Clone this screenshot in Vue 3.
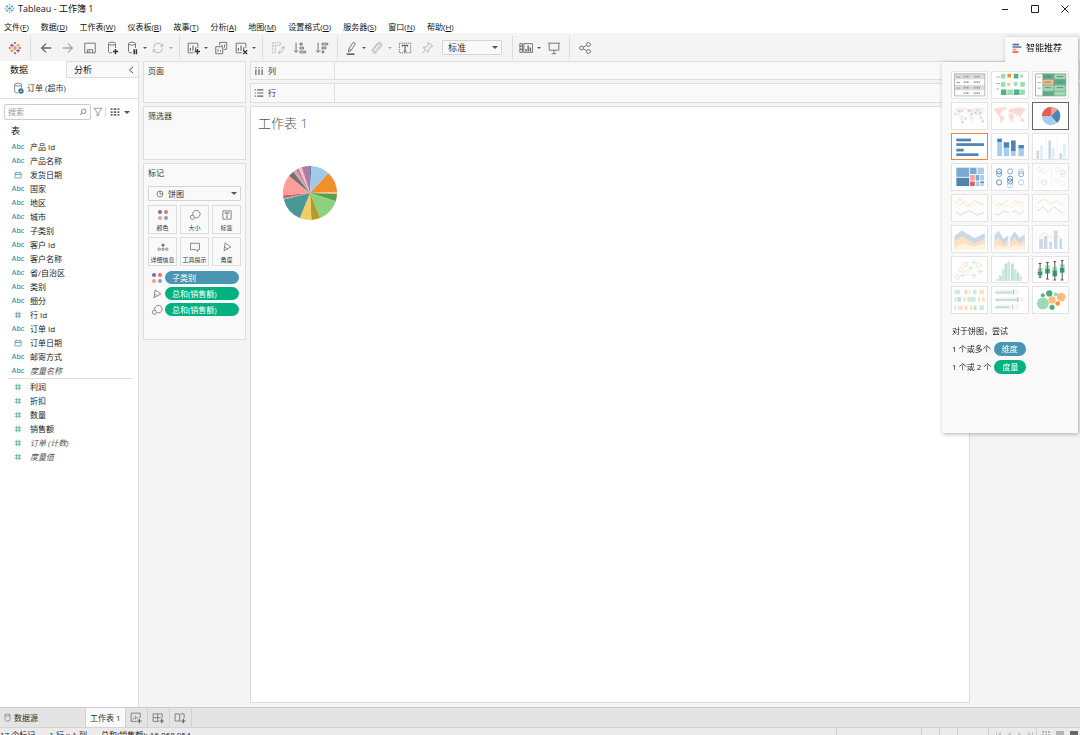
<script setup>
import { ref } from 'vue'

const search = ref('')
const fit = ref('标准')
const markType = ref('饼图')

const menus = [
  ['文件', 'F'], ['数据', 'D'], ['工作表', 'W'], ['仪表板', 'B'], ['故事', 'T'], ['分析', 'A'],
  ['地图', 'M'], ['设置格式', 'O'], ['服务器', 'S'], ['窗口', 'N'], ['帮助', 'H']
]

const logo = (a, b, c, d) =>
  `<g fill="none" stroke-width="1.3"><path stroke="${a}" d="M8 5.5v5M5.5 8h5"/><path stroke="${b}" d="M4.5 3v4M2.5 5h4M11.500 9v4M9.500 11h4"/><path stroke="${c}" d="M11.500 3v4M9.500 5h4M4.500 9v4M2.500 11h4"/><path stroke="${d}" d="M8 1v2.500M6.800 2.200h2.400M8 12.500V15M6.800 13.800h2.400M1 8h2.500M2.200 6.800v2.400M12.500 8H15M13.800 6.800v2.400"/></g>`

const bars = '<path d="M5 11V8M8 11V5M11 11V7" stroke-width="1.300"/>'
const glyphs = {
  logo: logo('#e8762c', '#c9485b', '#eda04a', '#5b879b'),
  appLogo: logo('#4a9ac2', '#5aa5c8', '#5aa5c8', '#7db8d2'),
  back: '<path d="M14 8H2.500M8 3 3 8l5 5" stroke-width="1.500"/>',
  forward: '<path d="M2 8h11.500M8 3l5 5-5 5" stroke-width="1.500"/>',
  save: '<path d="M2 2.500h12v11H2zM5 13.500V10h6v3.500M7 13v-2"/>',
  dbAdd: '<path d="M8 13.500c-3 0-4-.6-4-1.500V3M12 8V3"/><ellipse cx="8" cy="3" rx="4" ry="1.700"/><path d="M12 9v6M9 12h6" stroke="#333" stroke-width="1.600"/>',
  dbPause: '<path d="M8 13.500c-3 0-4-.6-4-1.500V3M12 8V3"/><ellipse cx="8" cy="3" rx="4" ry="1.700"/><path d="M10.500 9.500V15M13 9.500V15" stroke="#333" stroke-width="1.700"/>',
  refresh: '<path d="M3 7a5.300 5.300 0 0 1 10-1.500M13 9a5.300 5.300 0 0 1-10 1.500M13.500 3v3h-3M2.500 13v-3h3"/>',
  sheetAdd: '<path d="M9 13.500H2.500v-11h11V8"/>' + bars + '<path d="M13 9v6M10 12h6" stroke="#333" stroke-width="1.600"/>',
  duplicate: '<path d="M6.500 5V1.500h8v8H11M2 6.500h8v8H2zM9 6V4.500M12 7.500V4M4.500 12.500v-3M7.500 12.500v-2"/>',
  clear: '<path d="M9 13.500H2.500v-11h11V8"/>' + bars + '<path d="m10.500 10.500 4.500 4.500M15 10.500 10.500 15" stroke="#333" stroke-width="1.600"/>',
  swap: '<path d="M2 2h9v3H2zM2 5v8.500h3V5" stroke-dasharray="1.500 1"/><path d="M9 13c3 0 5-1.500 5-6M11.800 8.500 14 6l2 2.500M10.500 10.800 8.500 13l2 2"/>',
  sortAsc: '<path d="M3.500 2v11M1 10.500 3.500 13 6 10.500M8 2.500h2.500v2H8zM8 7h4v2H8zM8 11.500h6.500v2H8z"/>',
  sortDesc: '<path d="M3.500 2v11M1 10.500 3.500 13 6 10.500M8 2.500h6.500v2H8zM8 7h4.500v2H8zM8 11.500h2v2H8z"/>',
  pen: '<path d="M10.500 1.500 13 3 8 11l-3 1.500L5.500 9zM6 9l2 1.500"/><path d="M3 15h9" stroke="#333" stroke-width="1.400"/>',
  clip: '<path d="m7 10 4.500-5c1-1.300-.8-3-2-1.700L4.700 9c-1.700 2.200 1.200 4.800 3 2.800L13 5.700C14.600 3 11 0 8.800 2.300L3.500 8.500M3.200 9c-2 3 1.500 6.500 4.500 4"/>',
  textBox: '<path d="M1.500 2.500h13v11h-13z" stroke-dasharray="1.500 1"/><path d="M5 6.500V5h6v1.500M8 5v6.500M6.500 11.500h3" stroke-width="1.300"/>',
  pin: '<path d="m9.500 1.500 5 4.500-1.500.8-.8-.3-2.200 3 .2 2.500-1 .8L3.500 7.500l1-.7 2.500.2 2.800-2.500-.8-1.500zM6 10.500 2.500 14"/>',
  cards: '<path d="M1 3h3v3H1zM1 6h3v3.500H1zM1 9.500h3V13H1zM5.500 3H15.500v10h-10z"/><path d="M8 12V9M10.500 12V5M13 12V7.500" stroke-width="1.600"/>',
  present: '<path d="M1 2.500h14M2.500 3v7.500h11V3M8 10.500V14M5.500 14.500h5"/>',
  share: '<circle cx="4" cy="8" r="2.200"/><circle cx="12" cy="4" r="2.200"/><circle cx="12" cy="12" r="2.200"/><path d="m6 7 4-2M6 9l4 2"/>',
  label: '<path d="M2.500 2.500h11v11h-11z"/><path d="M5.500 6.500V5h5v1.500M8 5v6M6.800 11h2.400"/>',
  colour: '<g stroke="none"><circle cx="4" cy="4" r="2.700" fill="#7c6ba0"/><circle cx="12" cy="4" r="2.700" fill="#f4697b"/><circle cx="4" cy="12" r="2.700" fill="#f3a26d"/><circle cx="12" cy="12" r="2.700" fill="#7fa3d1"/></g>',
  size: '<path d="M5 8.200A5 5 0 1 1 8 11.500"/><circle cx="4.500" cy="11" r="2.700"/>',
  detail: '<circle cx="8" cy="5.500" r="1.500" fill="#666"/><circle cx="3" cy="11" r="1.600"/><circle cx="8" cy="11" r="1.600"/><circle cx="13" cy="11" r="1.600"/>',
  tooltip: '<path d="M2 3h12v8.500h-2.500V14L9 11.500H2z"/>',
  angle: '<path d="M5.500 2.500 13 8 4 13zM4.800 8.500c2 0 3 1 3.500 2.500"/>',
  pieMark: '<circle cx="8" cy="8" r="6"/><path d="M8 2v6h6"/>',
  calendar: '<path d="M2 3.500h12v10.500H2zM2 7h12M5 1.500v2M11 1.500v2"/>',
  hash: '<path d="M5.500 1.500v13M10.500 1.500v13M1.500 5.500h13M1.500 10.500h13"/>',
  db: '<path d="M3.500 3.500v9c0 2.500 9 2.500 9 0v-9"/><ellipse cx="8" cy="3.500" rx="4.500" ry="2"/>',
  dbCheck: '<path d="M8 14.500c-3.500 0-4.500-.8-4.500-2v-9M12.500 8V3.500"/><ellipse cx="8" cy="3.500" rx="4.500" ry="2"/><circle cx="12" cy="12" r="3.600" fill="#2c7a9d" stroke="none"/><path d="m10.300 12 1.300 1.300 2.200-2.500" stroke="#fff"/>',
  columns: '<path d="M3 1.500v2M8 1.500v2M13 1.500v2M3 5.500v9M8 5.500v9M13 5.500v9" stroke-width="2"/>',
  rows: '<path d="M1 3h2M1 8h2M1 13h2M5 3h10M5 8h10M5 13h10" stroke-width="1.900"/>',
  filter: '<path d="M1.500 2h13L9.500 8.500V13l-3 1.500v-6z"/>',
  find: '<circle cx="9.500" cy="6.500" r="4.500"/><path d="M6 10 2 14" stroke-width="1.500"/>',
  grid: '<path d="M1 3.500h3M6 3.500h4M12 3.500h3M1 8h3M6 8h4M12 8h3M1 12.500h3M6 12.500h4M12 12.500h3" stroke-width="2.800"/>',
  newSheet: '<path d="M9 12.500H1.500v-11h12V8M4.500 10V8M7 10V5M9.500 9V6.500"/><path d="M12.500 9v6M9.500 12h6" stroke-width="1.600"/>',
  newDash: '<path d="M9 12.500H1.500v-10h12V8M1.500 7.500h10M7.500 2.500v10"/><path d="M13 9v6M10 12h6" stroke-width="1.600"/>',
  newStory: '<path d="M9 13 7.500 12H1.500V2.500h5l1 1 1-1h5V8M7.500 3.500V12"/><path d="M12.500 9v6M9.500 12h6" stroke-width="1.600"/>',
  showMe: '<g stroke="none"><path fill="#7b6a94" d="M1 1h10v3H1z"/><path fill="#6f94be" d="M1 5h14v3H1z"/><path fill="#f2a064" d="M1 9h6v3H1z"/><path fill="#ee6470" d="M1 13h9v3H1z"/></g>'
}

const toolGroups = [
  [{ icon: 'logo', tip: '开始页面' }],
  [
    { icon: 'back', tip: '撤消' }, { icon: 'forward', tip: '重做', dim: true }, { icon: 'save', tip: '保存' },
    { icon: 'dbAdd', tip: '新建数据源' }, { icon: 'dbPause', tip: '暂停自动更新', more: true },
    { icon: 'refresh', tip: '运行更新', dim: true, more: true }
  ],
  [
    { icon: 'sheetAdd', tip: '新建工作表', more: true }, { icon: 'duplicate', tip: '复制' },
    { icon: 'clear', tip: '清除工作表', more: true }
  ],
  [{ icon: 'swap', tip: '交换行和列', dim: true }, { icon: 'sortAsc', tip: '升序排序' }, { icon: 'sortDesc', tip: '降序排序' }],
  [
    { icon: 'pen', tip: '突出显示', more: true }, { icon: 'clip', tip: '组成员', dim: true, more: true },
    { icon: 'textBox', tip: '显示标记标签' }, { icon: 'pin', tip: '固定轴', dim: true }, { fit: true }
  ],
  [{ icon: 'cards', tip: '显示/隐藏卡', more: true }, { icon: 'present', tip: '演示模式' }],
  [{ icon: 'share', tip: '共享' }]
]

const dimensions = [
  ['abc', '产品 Id'], ['abc', '产品名称'], ['calendar', '发货日期'], ['abc', '国家'], ['abc', '地区'],
  ['abc', '城市'], ['abc', '子类别'], ['abc', '客户 Id'], ['abc', '客户名称'], ['abc', '省/自治区'],
  ['abc', '类别'], ['abc', '细分'], ['hash', '行 Id'], ['abc', '订单 Id'], ['calendar', '订单日期'],
  ['abc', '邮寄方式'], ['abc', '度量名称', true]
]
const measures = [
  ['hash', '利润'], ['hash', '折扣'], ['hash', '数量'], ['hash', '销售额'],
  ['hash', '订单 (计数)', true], ['hash', '度量值', true]
]

const markButtons = [
  ['colour', '颜色'], ['size', '大小'], ['label', '标签'],
  ['detail', '详细信息'], ['tooltip', '工具提示'], ['angle', '角度']
]
const pills = [
  { icon: 'colour', name: '子类别', kind: 'dimension' },
  { icon: 'angle', name: '总和(销售额)', kind: 'measure' },
  { icon: 'size', name: '总和(销售额)', kind: 'measure' }
]

function wedge(cx, cy, r, from, to) {
  const at = (deg) => {
    const t = (deg * Math.PI) / 180
    return `${(cx + r * Math.sin(t)).toFixed(2)} ${(cy - r * Math.cos(t)).toFixed(2)}`
  }
  return `M${cx} ${cy}L${at(from)}A${r} ${r} 0 ${to - from > 180 ? 1 : 0} 1 ${at(to)}Z`
}

const pieStops = [
  [3, '#5b7fb5'], [43, '#a0cbe8'], [88, '#f28e2b'], [92, '#ffbe7d'], [108, '#59a14f'], [158, '#8cd17d'],
  [177, '#b6992d'], [202, '#f1ce63'], [256, '#499894'], [259, '#86bcb6'], [265, '#e15759'], [309, '#ff9d9a'],
  [322, '#79706e'], [329, '#bab0ac'], [335, '#d37295'], [342, '#fabfd2'], [360, '#b07aa1']
]
const slices = pieStops.map(([to, fill], i) => ({ fill, d: wedge(27, 27, 27, i ? pieStops[i - 1][0] : 0, to) }))

const r = (x, y, w, h, f) => `<rect x="${x}" y="${y}" width="${w}" height="${h}" fill="${f}"/>`
const line = (pts, c, w = 1) => `<polyline points="${pts}" fill="none" stroke="${c}" stroke-width="${w}"/>`
const area = (pts, f) => `<polygon points="${pts}" fill="${f}"/>`
const ring = (x, y, c, q = 2.8) => `<circle cx="${x}" cy="${y}" r="${q}" fill="none" stroke="${c}" stroke-width="1"/>`
const dot = (x, y, q, f) => `<circle cx="${x}" cy="${y}" r="${q}" fill="${f}"/>`
const plus = (x, y, c) => `<path d="M${x - 3} ${y}h6M${x} ${y - 3}v6" stroke="${c}" fill="none"/>`
const G = '#59ae8a', L = '#9ddbb4', P = '#ffbc7c', O = '#f79433', B = '#4e84ae', S = '#a3cef1'
const world = (f) =>
  `<g fill="${f}"><path d="M1 7l3-1.500 5-.5 4 .5-1 2-2 2-1.500 2L8 12l1 1.500 3 1 1 2-2 2.500-1 3.500L9 22l-1-4-.500-3L5 12 3 9zM11.500 5l4-.5-.500 2-2.500 1.500zM17 8l2-2 2 0 2 0 5-1.500 6 1 2 1-1 2-2 1 0 2-2 2-1 1 .5 2.500-1.500-1-1.500-3-1.500 1.500-1-2.500-2-.5L20 10l-2 .5zM17.500 12l3-.5 2.500 1.500 0 2-1 2-.500 3-1 1.500-1.500-4-1.500-2zM30 18l2-1.500 2 .5 1 2-1 1.500-3.500-.5z"/></g>`

const thumbs = [
  { name: '文本表', art:
    r(2, 2, 33, 24, '#fff') + r(2, 2, 33, 6, '#dcdcdc') + r(2, 14, 33, 6, '#dcdcdc') +
    [5, 11, 17, 23].map((y, i) => (i < 3 ? r(4, y, 4, 1, '#999') : '') + `<path d="M12 ${y}h6M23 ${y}h7" stroke="#999" stroke-width="1.800" stroke-dasharray="1.200 .6"/>`).join('') +
    '<rect x="2" y="2" width="33" height="24" fill="none" stroke="#b5b5b5"/>' },
  { name: '突出显示表', art:
    r(4, 5, 4, 1, '#aaa') + r(4, 12, 4, 1, '#aaa') + r(4, 18, 3, 1, '#aaa') +
    r(9, 2, 5, 5, L) + r(16, 2, 4, 4, O) + r(23, 2, 5, 5, G) + r(30, 3, 3, 3, L) +
    r(9, 11, 5, 5, L) + r(16, 12, 3, 3, P) + r(23, 11, 4, 4, L) + r(30, 11, 5, 5, L) +
    r(9, 19, 6, 6, G) + r(16, 19, 6, 6, L) + r(23, 19, 6, 6, G) + r(29, 19, 6, 6, L) },
  { name: '热图', art:
    r(4, 5, 4, 1, '#aaa') + r(4, 11, 4, 1, '#aaa') + r(4, 17, 4, 1, '#aaa') +
    r(10, 2, 12, 6, G) + r(22, 2, 13, 6, L) + r(10, 8, 12, 6, P) + r(22, 8, 13, 6, G) +
    r(10, 14, 12, 7, L) + r(22, 14, 13, 7, L) + r(10, 21, 12, 5, G) + r(22, 21, 13, 5, L) +
    [5, 11, 17].map((y) => line(`12,${y} 19,${y}`, '#568d70') + line(`25,${y} 32,${y}`, '#568d70')).join('') +
    '<path d="M2 2h33v24H2zM10 2v24M22 2v24M10 8h25M10 14h25M10 21h25" fill="none" stroke="#7e8b84" stroke-width=".7"/>' },
  { name: '符号地图', art: world('#f0f0f0') + [[3, 12], [7, 9], [10, 9], [14, 17], [11, 21], [19, 9], [17, 8], [21, 12], [27, 8], [25, 11], [31, 16], [33, 20], [30, 11]].map(([x, y]) => dot(x, y, 1.100, '#f2bcbc')).join('') },
  { name: '地图', art: world('#fbd9d7') },
  { name: '饼图', on: 'available', art: [[0, 45, '#ff9d9a'], [45, 142, '#4e84ae'], [142, 269, '#a3cef1'], [269, 360, '#e1605a']].map(([a, b, f]) => `<path d="${wedge(19, 14, 10, a, b)}" fill="${f}"/>`).join('') },
  { name: '水平条', on: 'suggested', art: r(4, 5, 16, 3, B) + r(4, 10, 30, 3, B) + r(4, 16, 8, 3, B) + r(4, 21, 24, 3, B) },
  { name: '堆叠条', art: r(5, 5, 5, 4, B) + r(5, 9, 5, 15, S) + r(12, 9, 6, 6, B) + r(12, 15, 6, 9, S) + r(20, 7, 5, 12, B) + r(20, 19, 5, 5, S) + r(28, 12, 6, 4, B) + r(28, 16, 6, 8, S) },
  { name: '并排条', art: r(3, 18, 3, 9, '#ccd8e4') + r(7, 12, 3, 15, '#e2eef8') + r(16, 7, 3, 20, '#ccd8e4') + r(20, 15, 3, 12, '#e2eef8') + r(28, 21, 3, 6, '#ccd8e4') + r(32, 11, 3, 16, '#e2eef8') + r(13, 2, 1, 25, '#f3f3f3') + r(25, 2, 1, 25, '#f3f3f3') },
  { name: '树状图', art:
    r(4, 4, 14, 10, '#79aad1') + r(4, 15, 14, 9, B) + r(19, 4, 7, 7, '#79aad1') + r(27, 4, 7, 7, S) +
    r(19, 12, 5, 6, '#ff9d9a') + r(19, 19, 5, 5, '#e1605a') + r(25, 12, 4, 6, '#79aad1') + r(30, 12, 4, 6, S) +
    r(25, 19, 4, 5, S) + r(30, 19, 4, 2, B) + r(30, 22, 4, 2, S) },
  { name: '圆视图', art: ring(7, 8, '#4e84ae') + ring(7, 11, '#79aad1') + ring(7, 20, '#4e84ae') + ring(19, 8, '#79aad1') + ring(19, 16, '#4e84ae') + ring(19, 19, '#4e84ae') + ring(19, 23, S) + ring(31, 8, S) + ring(31, 11, '#79aad1') + ring(31, 20, S) },
  { name: '并排圆', art: ring(6, 6, '#dce8f2', 2.500) + ring(12, 8, '#e4eff8', 2.500) + ring(6, 18, '#e4eff8', 2.500) + ring(12, 20, '#d5e0ea', 2.500) + ring(26, 6, '#e4eff8', 2.500) + ring(32, 9, '#d5e0ea', 2.500) + ring(32, 12, '#dce8f2', 2.500) + ring(25, 18, '#e4eff8', 2.500) + ring(32, 21, '#e4eff8', 2.500) + r(19, 2, 1, 24, '#f3f3f3') },
  { name: '连续线', art: line('3,10 8,4 16,13 24,6 31,11 34,9', '#fcd9b8') + line('3,13 8,11 14,7 20,13 27,7 34,11', '#fdebc8') + line('3,18 8,22 18,17 27,22 34,19', '#c8d9e6') },
  { name: '离散线', art: line('3,12 7,9 10,11 14,7 17,7', '#fcd9b8') + line('3,17 8,11 12,13 17,11', '#fdebc8') + line('3,20 7,22 11,17 17,19', '#c8d9e6') + r(18, 2, 1, 24, '#f3f3f3') + line('21,10 25,6 29,9 34,8', '#fcd9b8') + line('21,14 26,10 30,13 34,12', '#fdebc8') + line('21,19 25,17 29,22 34,17', '#c8d9e6') },
  { name: '双线', art: line('5,9 11,4 19,10 25,6 32,12', '#fcd9b8') + line('5,17 10,13 16,19 22,13 32,20', '#c8d9e6') + '<path d="M2.500 4v20M34.500 4v20" stroke="#e3e3e3" stroke-dasharray="1 2"/>' },
  { name: '连续面积图', art: area('2,11 10,5 24,13 35,8 35,26 2,26', '#cbd9e6') + area('2,16 10,11 24,19 35,14 35,26 2,26', '#fde0c2') + area('2,23 10,19 24,22 35,19 35,26 2,26', '#fff2e1') },
  { name: '离散面积图', art: area('2,10 6,5 12,14 17,10 17,26 2,26', '#cbd9e6') + area('2,16 6,12 12,20 17,15 17,26 2,26', '#fde0c2') + area('2,23 6,20 12,23 17,20 17,26 2,26', '#fff2e1') + area('19,13 24,6 29,13 35,9 35,26 19,26', '#cbd9e6') + area('19,19 24,12 29,19 35,15 35,26 19,26', '#fde0c2') + area('19,23 24,20 29,22 35,20 35,26 19,26', '#fff2e1') },
  { name: '双组合', art: r(6, 14, 4, 11, '#cbd9e6') + r(11, 11, 4, 14, '#cbd9e6') + r(17, 17, 3, 8, '#cbd9e6') + r(22, 5, 4, 20, '#cbd9e6') + r(28, 14, 3, 11, '#cbd9e6') + line('6,12 12,7 19,14 24,9 30,14', '#fcd9b8') + '<path d="M2.500 4v20M34.500 4v20" stroke="#e3e3e3" stroke-dasharray="1 2"/>' },
  { name: '散点图', art: ring(14, 8, '#fcdfc2', 2.400) + ring(28, 9, '#fcdfc2', 2.400) + ring(9, 14, '#fcdfc2', 2.400) + ring(16, 17, '#fcdfc2', 2.400) + ring(5, 22, '#fcdfc2', 2.400) + plus(23, 6, '#cde8da') + plus(20, 12, '#cde8da') + plus(30, 16, '#cde8da') + plus(11, 20, '#cde8da') + plus(23, 20, '#cde8da') },
  { name: '直方图', art: [24, 20, 13, 7, 5, 7, 13, 17, 21].map((y, i) => r(4 + i * 3 + (i > 4 ? 1 : 0), y, 3, 26 - y, i % 2 ? '#c1e2d2' : '#cfe9dc')).join('') },
  { name: '盒须图', art: [[7, 7, 22, 12, 20], [15, 6, 24, 9, 18], [23, 5, 25, 11, 21], [31, 4, 25, 8, 17]].map(([x, a, b, c, d]) => `<path d="M${x} ${a}V${b}M${x - 1.5} ${a}h3M${x - 1.5} ${b}h3" stroke="#444" fill="none"/>` + r(x - 2.5, c, 5, 5, L) + r(x - 2.5, c + 4, 5, d - c - 4, '#3f9c74') + line(`${x},${c} ${x},${d}`, '#44765e')).join('') },
  { name: '甘特图', art:
    r(2, 3, 6, 5, '#cfe9dc') + r(13, 3, 3, 5, '#fcd9b8') + r(18, 3, 1, 5, '#fcd9b8') + r(22, 3, 4, 5, '#cfe9dc') + r(29, 3, 5, 5, '#fde0c2') +
    r(2, 11, 2, 5, '#cfe9dc') + r(5, 11, 4, 5, '#bfe1d0') + r(12, 11, 2, 5, '#fcd9b8') + r(16, 11, 9, 5, '#cfe9dc') + r(28, 11, 2, 5, '#fcd9b8') + r(32, 11, 3, 5, '#fde0c2') +
    r(2, 20, 2, 5, '#cfe9dc') + r(6, 20, 5, 5, '#fde0c2') + r(13, 20, 3, 5, '#fcd9b8') + r(19, 20, 2, 5, '#fcd9b8') + r(23, 20, 3, 5, '#bfe1d0') + r(29, 20, 5, 5, '#cfe9dc') },
  { name: '靶心图', art: r(3, 3, 26, 5, '#f3f3f3') + r(3, 5, 18, 2, '#bfdfcf') + r(22, 3, 1, 5, '#aaa') + r(3, 11, 31, 5, '#f6f6f6') + r(3, 13, 24, 2, '#bfdfcf') + r(27, 11, 1, 5, '#aaa') + r(3, 19, 26, 5, '#f6f6f6') + r(3, 21, 15, 2, '#bfdfcf') + r(21, 19, 1, 5, '#ccc') },
  { name: '填充气泡图', art: dot(10, 18, 6.500, L) + dot(10, 9, 2.200, G) + dot(17, 7, 3.400, '#4fa783') + dot(24, 8, 2.200, L) + dot(30, 11, 4.800, P) + dot(20, 14, 4, P) + dot(26, 18, 2.500, O) + dot(20, 22, 2.800, '#4fa783') }
]
</script>

<template>
  <div class="app">
    <header class="titlebar">
      <svg class="ic appmark" viewBox="0 0 16 16" v-html="glyphs.appLogo"></svg>
      <span class="apptitle">Tableau - 工作簿 1</span>
      <div class="window">
        <button aria-label="最小化"><svg viewBox="0 0 8 8"><path d="M1 4.500h6" /></svg></button>
        <button aria-label="最大化"><svg viewBox="0 0 8 8"><path d="M.5 .5h7v7h-7z" /></svg></button>
        <button aria-label="关闭"><svg viewBox="0 0 8 8"><path d="m.5 .5 7 7M7.500 .5l-7 7" /></svg></button>
      </div>
    </header>

    <nav class="menubar">
      <button v-for="[name, key] in menus" :key="key">{{ name }}(<u>{{ key }}</u>)</button>
    </nav>

    <div class="toolbar">
      <div v-for="(group, g) in toolGroups" :key="g" class="group">
        <template v-for="(tool, i) in group" :key="i">
          <span v-if="tool.fit" class="pick fit">
            <select v-model="fit" aria-label="适合"><option>标准</option><option>适合宽度</option><option>整个视图</option></select>
            <i class="caret"></i>
          </span>
          <template v-else>
            <button class="tool" :class="{ narrow: tool.more, dim: tool.dim }" :aria-label="tool.tip">
              <svg class="ic" viewBox="0 0 16 16" v-html="glyphs[tool.icon]"></svg>
            </button>
            <button v-if="tool.more" class="more" :class="{ dim: tool.dim }" :aria-label="tool.tip + '选项'"><i class="caret small"></i></button>
          </template>
        </template>
      </div>
    </div>

    <main class="work">
      <aside class="data">
        <div class="sidetabs">
          <button class="active">数据</button>
          <button class="other">分析</button>
          <button class="fold" aria-label="折叠"><svg viewBox="0 0 6 8"><path d="M5 1 1.500 4 5 7" /></svg></button>
        </div>
        <button class="source"><svg class="ic" viewBox="0 0 16 16" v-html="glyphs.dbCheck"></svg>订单 (超市)</button>
        <div class="searchrow">
          <div class="searchbox">
            <input v-model="search" type="text" placeholder="搜索" aria-label="搜索" />
            <svg class="ic" viewBox="0 0 16 16" v-html="glyphs.find"></svg>
          </div>
          <button aria-label="筛选字段"><svg class="ic" viewBox="0 0 16 16" v-html="glyphs.filter"></svg></button>
          <button class="view" aria-label="查看方式"><svg class="ic" viewBox="0 0 16 16" v-html="glyphs.grid"></svg><i class="caret"></i></button>
        </div>
        <h2>表</h2>
        <ul>
          <li v-for="[type, name, auto] in dimensions" :key="name" :class="{ auto }">
            <span class="type"><b v-if="type === 'abc'">Abc</b><svg v-else viewBox="0 0 16 16" v-html="glyphs[type]"></svg></span>{{ name }}
          </li>
        </ul>
        <ul class="measures">
          <li v-for="[type, name, auto] in measures" :key="name" :class="{ auto }">
            <span class="type"><svg viewBox="0 0 16 16" v-html="glyphs[type]"></svg></span>{{ name }}
          </li>
        </ul>
      </aside>

      <section class="cards">
        <div class="card pages"><h3>页面</h3></div>
        <div class="card filters"><h3>筛选器</h3></div>
        <div class="card marks">
          <h3>标记</h3>
          <span class="pick marktype">
            <svg class="ic" viewBox="0 0 16 16" v-html="glyphs.pieMark"></svg>
            <select v-model="markType" aria-label="标记类型"><option>饼图</option><option>条形图</option><option>线</option></select>
            <i class="caret"></i>
          </span>
          <div class="markgrid">
            <button v-for="[icon, name] in markButtons" :key="name">
              <svg class="ic" viewBox="0 0 16 16" v-html="glyphs[icon]"></svg>{{ name }}
            </button>
          </div>
          <div v-for="p in pills" :key="p.icon" class="encoding">
            <svg class="ic" viewBox="0 0 16 16" v-html="glyphs[p.icon]"></svg>
            <button class="pill" :class="p.kind">{{ p.name }}</button>
          </div>
        </div>
      </section>

      <section class="canvas">
        <div class="shelf"><span><svg class="ic" viewBox="0 0 16 16" v-html="glyphs.columns"></svg>列</span></div>
        <div class="shelf"><span><svg class="ic" viewBox="0 0 16 16" v-html="glyphs.rows"></svg>行</span></div>
        <article class="sheet">
          <h1>工作表 1</h1>
          <svg class="pie" viewBox="0 0 54 54" role="img" aria-label="按子类别的销售额">
            <path v-for="s in slices" :key="s.fill" :d="s.d" :fill="s.fill" />
          </svg>
        </article>
      </section>
    </main>

    <aside class="showme">
      <button class="showtab"><svg class="ic" viewBox="0 0 16 16" v-html="glyphs.showMe"></svg>智能推荐</button>
      <div class="showbody">
        <div class="thumbs">
          <button v-for="t in thumbs" :key="t.name" :class="t.on" :aria-label="t.name">
            <svg viewBox="0 0 37 28" v-html="t.art"></svg>
          </button>
        </div>
        <p>对于饼图，尝试</p>
        <p>1 个或多个 <span class="tag dimension">维度</span></p>
        <p>1 个或 2 个 <span class="tag measure">度量</span></p>
      </div>
    </aside>

    <footer>
      <div class="sheettabs">
        <button class="datasource"><svg class="ic" viewBox="0 0 16 16" v-html="glyphs.db"></svg>数据源</button>
        <button class="current">工作表 1</button>
        <button class="new" aria-label="新建工作表"><svg class="ic" viewBox="0 0 16 16" v-html="glyphs.newSheet"></svg></button>
        <button class="new" aria-label="新建仪表板"><svg class="ic" viewBox="0 0 16 16" v-html="glyphs.newDash"></svg></button>
        <button class="new" aria-label="新建故事"><svg class="ic" viewBox="0 0 16 16" v-html="glyphs.newStory"></svg></button>
      </div>
      <div class="status">
        <span>17 个标记</span><span>1 行 x 1 列</span><span>总和(销售额): 16,068,954</span>
        <div class="cells">
          <i class="wide"></i><i></i><i></i><i class="gap"></i>
          <span class="steps">
            <svg viewBox="0 0 40 8"><path d="M2 1v7h1V1zM7 1v7L3 4.500zM17 1v7l-4-3.500zM24 1v7l4-3.500zM34 1v7l4-3.500zM38 1v7h1V1z" /></svg>
          </span>
          <span class="views">
            <svg viewBox="0 0 38 8"><path d="M1 1h2v2H1zM4 1h2v2H4zM7 1h2v2H7zM1 4h2v2H1zM4 4h2v2H4zM7 4h2v2H7z" fill="#b5b5b5" /><path d="M15 1h8v7h-8z" fill="#b5b5b5" /><path d="M29 1h8v7h-8z" fill="#666" /></svg>
          </span>
        </div>
      </div>
    </footer>
  </div>
</template>

<style>
body { margin: 0; }
</style>

<style scoped>
.app {
  position: relative;
  display: flex;
  flex-direction: column;
  height: 100vh;
  overflow: hidden;
  background: #f4f4f4;
  color: #333;
  font: 8px/14px "Open Sans", "Noto Sans CJK SC", sans-serif;
}
.app * { box-sizing: border-box; }
button, input, select {
  margin: 0;
  padding: 0;
  border: 0;
  background: none;
  color: inherit;
  font: inherit;
}
button { display: flex; align-items: center; white-space: nowrap; }
h1, h2, h3, p, ul { margin: 0; padding: 0; font-weight: 400; }
svg { display: block; flex: none; }
.ic { width: 12px; height: 12px; fill: none; stroke: #666; stroke-width: 1; }
.caret {
  flex: none;
  width: 0;
  height: 0;
  border: 3px solid transparent;
  border-top: 3px solid #555;
  border-bottom: 0;
}
.caret.small { border-width: 2px 2px 0; }

.titlebar { display: flex; align-items: center; height: 17px; padding-left: 4px; background: #fff; color: #111; font-size: 9px; }
.appmark { width: 11px; height: 11px; }
.apptitle { margin-left: 3px; }
.window { display: flex; margin-left: auto; }
.window button { width: 30px; height: 17px; justify-content: center; }
.window svg { width: 8px; height: 8px; fill: none; stroke: #222; }

.menubar { display: flex; gap: 12px; height: 16px; padding: 2px 4px 0; background: #fff; color: #111; }
.menubar button { display: block; line-height: 15px; }
.menubar u { text-underline-offset: 1px; }

.toolbar { display: flex; height: 28px; padding-top: 3px; }
.group { display: flex; align-items: center; height: 23px; padding: 0 4px; border-left: 1px solid #dcdcdc; }
.group:first-child { padding: 0 4px; border: 0; }
.tool { width: 22px; height: 20px; justify-content: center; }
.tool .ic { width: 14px; height: 14px; }
.tool.narrow { width: 18px; }
.more { width: 8px; height: 20px; justify-content: center; }
.dim { opacity: .5; }
.pick { position: relative; display: flex; align-items: center; border: 1px solid #d4d4d4; border-radius: 1px; background: #f9f9f9; }
.pick select { flex: 1; min-width: 0; height: 14px; padding: 0 0 0 5px; appearance: none; }
.pick .caret { margin: 0 3px; }
.fit { width: 60px; height: 15px; margin: 0 6px 0 4px; font-size: 9px; }

.work { display: flex; flex: 1; min-height: 0; }
.data { width: 139px; border-right: 1px solid #dedede; background: #fff; }
.sidetabs { display: flex; height: 17px; font-size: 9px; }
.sidetabs .active { width: 66px; padding: 0 0 0 10px; color: #111; }
.sidetabs .other { flex: 1; padding-left: 7px; border: 1px solid #dedede; border-width: 1px 0 1px 1px; background: #f9f9f9; color: #111; }
.sidetabs .fold { width: 14px; justify-content: center; border: 1px solid #dedede; border-width: 1px 0; background: #f9f9f9; }
.fold svg { width: 6px; height: 8px; fill: none; stroke: #555; }
.source { gap: 3px; width: 100%; height: 21px; padding-left: 12px; border-bottom: 1px solid #e2e2e2; }
.searchrow { display: flex; align-items: center; height: 16px; margin: 5px 7px 0 4px; }
.searchbox { display: flex; align-items: center; width: 87px; height: 16px; padding: 0 3px; border: 1px solid #ccc; border-radius: 2px; }
.searchbox input { flex: 1; min-width: 0; outline: 0; }
.searchbox input::placeholder { color: #999; }
.searchbox .ic { width: 8px; height: 8px; stroke-width: 1.5; }
.searchrow button { padding: 0 2px; }
.searchrow .ic { width: 10px; height: 10px; }
.searchrow .searchbox .ic { width: 8px; height: 8px; }
.searchrow .view { gap: 4px; padding-left: 4px; border-left: 1px solid #ddd; }
.data h2 { margin-left: 11px; font-size: 9px; line-height: 22px; height: 20px; color: #111; }
.data ul { list-style: none; }
.data li { display: flex; align-items: center; height: 14px; color: #222; }
.data .auto { color: #555; font-style: italic; }
.type { display: flex; justify-content: center; width: 12px; margin: 0 6px 0 12px; font-style: normal; color: #4e8fae; }
.type b { font-size: 7px; font-weight: 600; }
.type svg { width: 8px; height: 8px; fill: none; stroke: #4e8fae; stroke-width: 1.5; }
.data .measures { margin: 0 5px 0 8px; padding-top: 1px; border-top: 1px solid #e0e0e0; }
.measures .type { margin-left: 4px; }
.measures svg { stroke: #4aa587; }

.cards { width: 103px; margin: 0 4px; }
.card { padding: 2px 4px; border: 1px solid #dedede; background: #f9f9f9; }
.card h3 { font-size: 8px; line-height: 14px; }
.pages { height: 42px; }
.filters { height: 54px; margin-top: 3px; }
.marks { height: 177px; margin-top: 3px; }
.marktype { height: 15px; margin: 6px 0 4px; }
.marktype .ic { width: 8px; height: 8px; margin-left: 7px; stroke-width: 1.5; }
.marktype select { padding-left: 4px; }
.markgrid { display: grid; grid-template-columns: repeat(3, 1fr); gap: 3px; margin-bottom: 5px; }
.markgrid button { flex-direction: column; justify-content: flex-end; gap: 2px; height: 29px; border: 1px solid #dcdcdc; font-size: 6px; line-height: 10px; }
.encoding { display: flex; align-items: center; gap: 2px; height: 13px; margin: 0 2px 3px 3px; }
.pill { flex: 1; height: 13px; padding-left: 7px; border-radius: 7px; color: #fff; }
.dimension { background: #4996b2; }
.measure { background: #00b180; }

.canvas { display: flex; flex: 1; flex-direction: column; min-width: 0; }
.shelf { height: 19px; margin-bottom: 3px; border: 1px solid #dedede; background: #f9f9f9; }
.shelf + .shelf { height: 20px; }
.shelf span { display: flex; align-items: center; gap: 4px; width: 84px; height: 100%; padding-left: 3px; border-right: 1px solid #dedede; }
.shelf .ic { width: 10px; height: 10px; }
.sheet { flex: 1; margin: 0 110px 4px 0; padding: 7px; border: 1px solid #dcdcdc; background: #fff; }
.sheet h1 { font-size: 13px; line-height: 18px; color: #555; font-weight: 300; }
.pie { width: 54px; height: 54px; margin: 34px 0 0 25px; }

.showme { position: absolute; top: 37px; right: 2px; width: 136px; filter: drop-shadow(1px 1px 2px rgba(0, 0, 0, .3)); }
.showtab { gap: 4px; height: 25px; margin-left: auto; padding: 0 16px 3px 7px; background: #f9f9f9; color: #111; font-size: 9px; }
.showtab .ic { width: 10px; height: 10px; }
.showbody { height: 371px; padding: 9px; background: #f9f9f9; }
.thumbs { display: grid; grid-template: repeat(8, 1fr) / repeat(3, 1fr); gap: 3px; height: 243px; margin-bottom: 8px; }
.thumbs button { min-height: 0; overflow: hidden; border: 1px solid #e4e4e4; background: #fff; }
.thumbs svg { width: 100%; height: 100%; }
.thumbs .available { border-color: #666; }
.thumbs .suggested { border-color: #f0883c; }
.showbody p { padding-left: 1px; line-height: 18px; color: #222; }
.tag { display: inline-block; width: 32px; height: 14px; margin-left: 1px; border-radius: 7px; color: #fff; line-height: 14px; text-align: center; }

.sheettabs { display: flex; height: 21px; border-top: 1px solid #ccc; border-bottom: 1px solid #d4d4d4; background: #e4e4e4; }
.sheettabs button { border-right: 1px solid #d0d0d0; }
.sheettabs .datasource { gap: 2px; width: 86px; padding-left: 3px; }
.datasource .ic { width: 9px; height: 9px; }
.sheettabs .current { padding: 0 4px; background: #f9f9f9; }
.sheettabs .new { width: 22px; justify-content: center; }
.status { display: flex; height: 7px; overflow: hidden; background: #ebebeb; color: #222; line-height: 13px; }
.status > span { margin-right: 14px; white-space: nowrap; }
.cells { display: flex; height: 7px; margin-left: auto; }
.cells i { width: 18px; border-left: 1px solid #d0d0d0; }
.cells .wide { width: 85px; }
.cells .gap { width: 31px; }
.steps { width: 48px; padding-left: 5px; border-left: 1px solid #d0d0d0; }
.steps svg { width: 40px; height: 8px; margin-top: 3px; fill: #c0c0c0; }
.views { width: 44px; padding-left: 4px; border-left: 1px solid #d0d0d0; }
.views svg { width: 38px; height: 8px; margin-top: 2px; }
</style>
